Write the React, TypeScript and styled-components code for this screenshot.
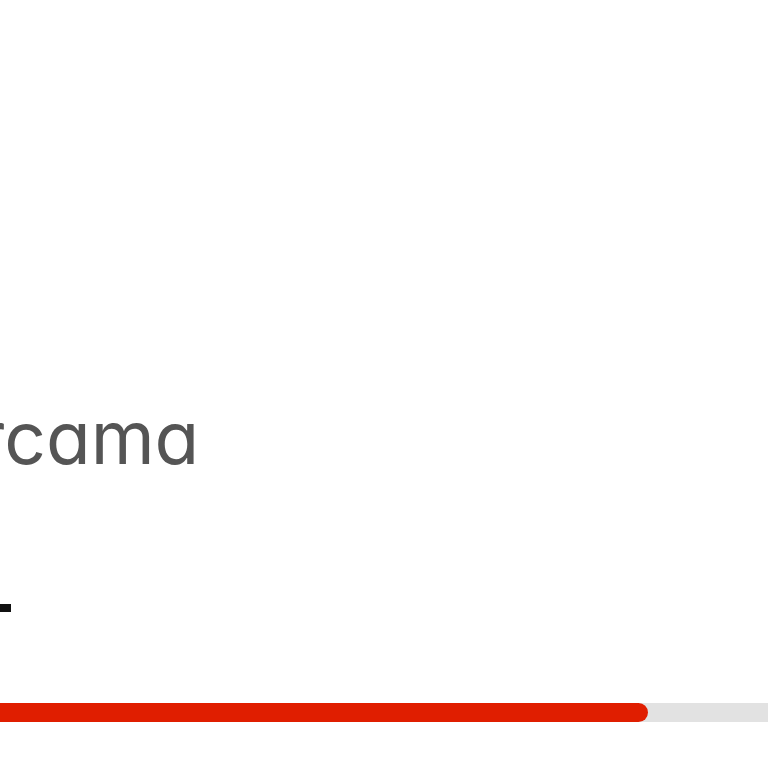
import * as React from 'react'
import styled, { createGlobalStyle } from 'styled-components'

const GlobalStyle = createGlobalStyle`
  html, body {
    margin: 0;
    padding: 0;
    background: #ffffff;
  }
`

const Page = styled.div`
  width: 768px;
  height: 768px;
  overflow: hidden;
  background: #ffffff;
  display: flex;
  flex-direction: column;
  font-family: 'Inter', 'Liberation Sans', sans-serif;
`

const Title = styled.h1`
  margin: 0;
  margin-top: 393px;
  margin-left: -22px;
  font-size: 73px;
  line-height: 90px;
  font-weight: 400;
  letter-spacing: 0px;
  color: #555555;
  font-feature-settings: 'cv11' 1;
  white-space: nowrap;
`

const Dash = styled.div`
  margin-top: 121px;
  width: 11px;
  height: 8px;
  background: #111111;
`

interface TrackProps {
  height?: number
}

const Track = styled.div<TrackProps>`
  margin-top: 91px;
  margin-left: -20px;
  width: 820px;
  height: ${(props: TrackProps) => (props.height || 19)}px;
  background: #e2e2e2;
  border-radius: 10px;
  display: flex;
`

const Fill = styled.div`
  height: 100%;
  background: #e01e00;
  border-radius: 10px;
`

const App: React.FC = () => {
  const progress = 668
  return (
    <>
      <GlobalStyle />
      <Page>
        <Title>rcama</Title>
        <Dash />
        <Track height={19}>
          <Fill style={{ width: `${progress}px` }} />
        </Track>
      </Page>
    </>
  )
}

export default App
